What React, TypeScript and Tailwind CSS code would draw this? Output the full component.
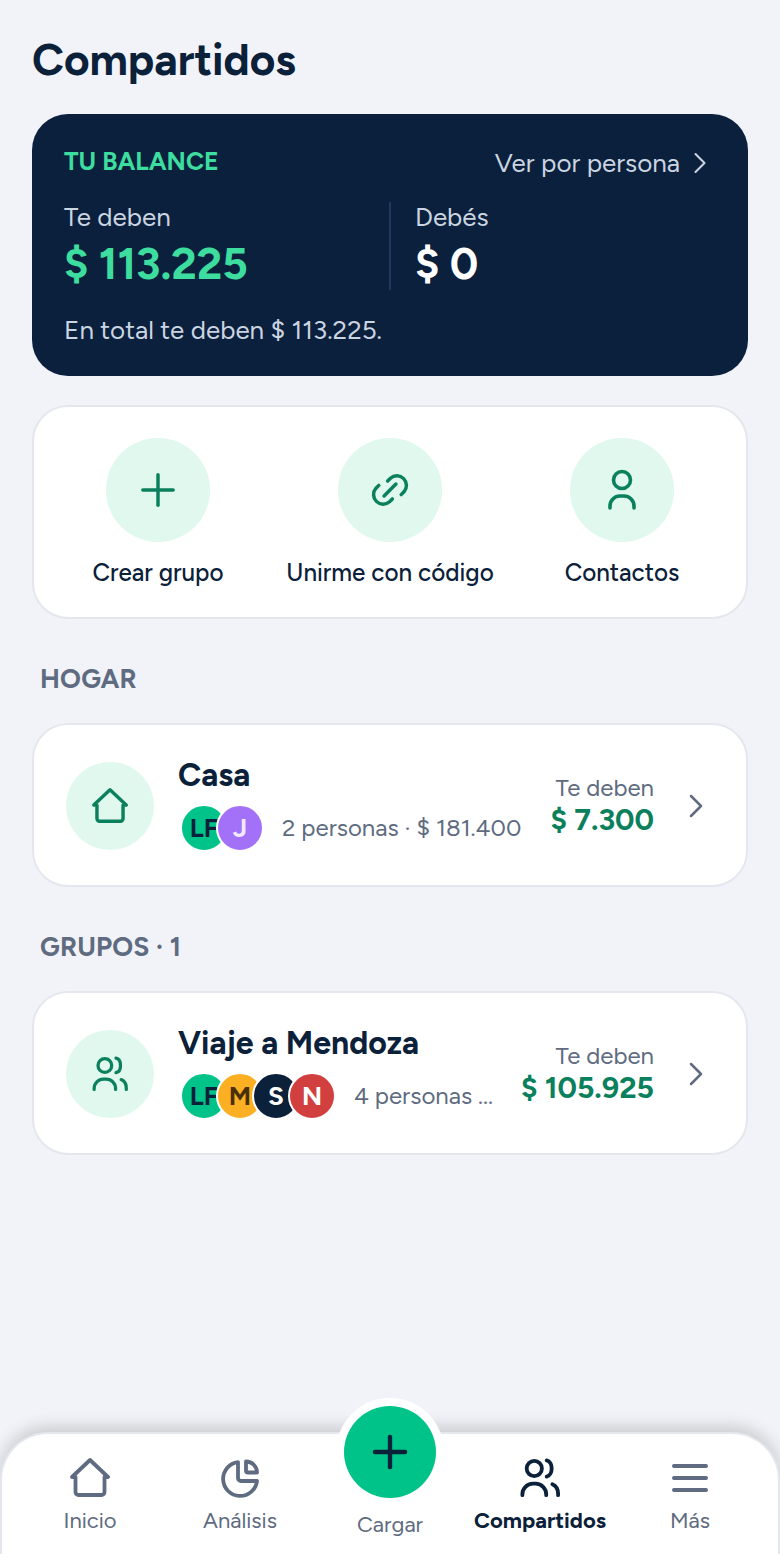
import React from 'react';
import { ChevronRight, Plus } from 'lucide-react';

// hand drawn icons, they don't match any lucide glyph closely enough
const HomeIcon = ({ className }: { className: string }) => (
  <svg viewBox="0 0 40 40" fill="none" stroke="currentColor" strokeWidth="3.8" strokeLinecap="round" strokeLinejoin="round" className={className}>
    <path d="M2 19 20 2l18 17h-3.5v15a3 3 0 0 1-3 3h-23a3 3 0 0 1-3-3V19z" />
  </svg>
);

const UsersIcon = ({ className, strokeWidth = 4 }: { className: string; strokeWidth?: number }) => (
  <svg viewBox="0 0 42 42" fill="none" stroke="currentColor" strokeWidth={strokeWidth} strokeLinecap="round" strokeLinejoin="round" className={className}>
    <circle cx="15" cy="11" r="8" />
    <path d="M28 2.500c7 1.500 7 15.500 0 17" />
    <path d="M2.500 39v-1a11 11 0 0 1 11-11h3a11 11 0 0 1 11 11v1" />
    <path d="M34 27.500c3.500 1.500 6 5.500 6 10v1.500" />
  </svg>
);

const LinkIcon = () => (
  <svg viewBox="0 0 100 100" fill="none" stroke="currentColor" strokeWidth="3.700" strokeLinecap="round" className="size-[94px] text-[#0a805c]">
    <path d="M47.500 40.500l3-3a10.200 10.200 0 0 1 14.400 14.400l-3 3" />
    <path d="M52.500 59.500l-3 3a10.200 10.200 0 0 1-14.400-14.400l3-3" />
    <path d="M43.700 56.300l12.600-12.600" />
  </svg>
);

const PersonIcon = () => (
  <svg viewBox="0 0 100 100" fill="none" stroke="currentColor" strokeWidth="3.600" strokeLinecap="round" className="size-[100px] text-[#0a805c]">
    <circle cx="50" cy="40" r="8.500" />
    <path d="M38 68v-2a10 10 0 0 1 10-10h4a10 10 0 0 1 10 10v2" />
  </svg>
);

const PieIcon = () => (
  <svg viewBox="0 0 40 40" fill="none" stroke="currentColor" strokeWidth="3.800" strokeLinejoin="round" className="size-10">
    <path d="M18 4.100A17 17 0 1 0 37 23H21a3 3 0 0 1-3-3V4.100z" />
    <path d="M26 3.500A11 11 0 0 1 37 14.500h-9a2 2 0 0 1-2-2v-9z" />
  </svg>
);

const MenuIcon = () => (
  <svg viewBox="0 0 40 40" fill="none" stroke="currentColor" strokeWidth="4" strokeLinecap="round" className="size-10">
    <path d="M4 8h32M4 20h32M4 32h32" />
  </svg>
);

type Person = { initials: string; bg: string; text: string };

const lf: Person = { initials: 'LF', bg: 'bg-[#00c389]', text: 'text-[#0b2039]' };
const avatarsCasa: Person[] = [lf, { initials: 'J', bg: 'bg-[#a371f7]', text: 'text-[#f1e9ff]' }];
const avatarsViaje: Person[] = [
  lf,
  { initials: 'M', bg: 'bg-[#fbb024]', text: 'text-[#4a3008]' },
  { initials: 'S', bg: 'bg-[#0b2039]', text: 'text-white' },
  { initials: 'N', bg: 'bg-[#d13f3f]', text: 'text-white' },
];

const Avatars = ({ people }: { people: Person[] }) => (
  <div className="flex shrink-0">
    {people.map((p, i) => (
      <div
        key={p.initials}
        className={`size-12 rounded-full border-2 border-white overflow-hidden flex items-center justify-center text-[26px] font-bold ${p.bg} ${p.text} ${i > 0 ? '-ml-3' : ''}`}
      >
        {p.initials}
      </div>
    ))}
  </div>
);

const GroupCard = ({ icon, name, people, sub, amount }: { icon: React.ReactNode; name: string; people: Person[]; sub: string; amount: string }) => (
  <div className="h-[164px] rounded-[36px] bg-white border-2 border-[#e4e7ee] pl-8 pr-[30px] pt-[2px] flex items-center">
    <div className="size-[88px] shrink-0 rounded-full bg-[#e0f8ee] text-[#0a805c] flex items-center justify-center">{icon}</div>
    <div className="flex-1 min-w-0 ml-6 -mt-[5px]">
      <div className="text-[32px] leading-[40px] font-bold text-[#0b2039] whitespace-nowrap">{name}</div>
      <div className="flex items-center gap-[18px] mt-[9px] pl-[2px]">
        <Avatars people={people} />
        <div className="text-[24px] text-[#5e6b80] whitespace-nowrap">{sub}</div>
      </div>
    </div>
    <div className="shrink-0 text-right ml-2 -mt-[2px]">
      <div className="text-[24px] leading-[30px] text-[#5e6b80]">Te deben</div>
      <div className="-mt-[1px] text-[30px] leading-[36px] font-bold text-[#0a805c]">{amount}</div>
    </div>
    <ChevronRight size={40} strokeWidth={1.5} className="shrink-0 ml-[22px] text-[#5e6b80]" />
  </div>
);

const QuickAction = ({ icon, label }: { icon: React.ReactNode; label: string }) => (
  <div className="flex flex-col items-center">
    <div className="size-[104px] rounded-full bg-[#e0f8ee] text-[#0a805c] flex items-center justify-center">{icon}</div>
    <div className="mt-[16px] text-[24.25px] leading-[30px] font-medium text-[#0b2039] whitespace-nowrap">{label}</div>
  </div>
);

const NavItem = ({ icon, label, active }: { icon?: React.ReactNode; label: string; active?: boolean }) => (
  <div className={`flex flex-col items-center ${active ? 'text-[#0b2039]' : 'text-[#5e6b80]'}`}>
    {icon}
    <div className={`mt-[9px] text-[22px] leading-[28px] whitespace-nowrap ${active ? 'font-bold' : ''}`}>{label}</div>
  </div>
);

export default function App() {
  return (
    <div className="relative h-[1554px] overflow-hidden flex flex-col bg-[#f1f3f8] font-['Figtree','Inter',sans-serif]">
      <div className="flex-1 px-8 pt-[34px]">
        <h1 className="text-[44px] leading-[52px] font-bold text-[#0b2039]">Compartidos</h1>

        {/* Balance */}
        <div className="mt-[28px] h-[262px] rounded-[36px] bg-[#0a203c] px-8 pt-[30px]">
          <div className="flex items-start justify-between">
            <span className="text-[25px] leading-[34px] font-bold text-[#3ddc9f]">TU BALANCE</span>
            <span className="mt-[1px] flex items-center text-[26px] leading-[34px] text-[#cbd5e1]">
              Ver por persona
              <ChevronRight size={36} strokeWidth={1.4} className="ml-[2px] -mr-[2px]" />
            </span>
          </div>
          <div className="flex mt-[21px]">
            <div className="w-[327px] h-[88px] border-r-2 border-[#1c3a5e]">
              <div className="text-[26px] leading-[30px] text-[#cbd5e1]">Te deben</div>
              <div className="mt-[4px] text-[44px] leading-[56px] font-bold text-[#3ddc9f]">$ 113.225</div>
            </div>
            <div className="pl-[24px]">
              <div className="text-[26px] leading-[30px] text-[#cbd5e1]">Debés</div>
              <div className="mt-[4px] text-[44px] leading-[56px] font-bold text-white">$ 0</div>
            </div>
          </div>
          <div className="mt-[22px] text-[26px] leading-[32px] text-[#cbd5e1]">En total te deben $ 113.225.</div>
        </div>

        {/* Acciones */}
        <div className="mt-[29px] h-[214px] rounded-[36px] bg-white border-2 border-[#e4e7ee] px-2 pt-[31px] grid grid-cols-3">
          <QuickAction icon={<Plus size={52} strokeWidth={1.6} />} label="Crear grupo" />
          <QuickAction icon={<LinkIcon />} label="Unirme con código" />
          <QuickAction icon={<PersonIcon />} label="Contactos" />
        </div>

        <div className="mt-[43px] pl-2 text-[26.5px] leading-[34px] tracking-[0.2px] font-bold text-[#5e6b80]">HOGAR</div>
        <div className="mt-[27px]">
          <GroupCard icon={<HomeIcon className="size-9" />} name="Casa" people={avatarsCasa} sub="2 personas · $ 181.400" amount="$ 7.300" />
        </div>

        <div className="mt-[43px] pl-2 text-[26.5px] leading-[34px] tracking-[0.2px] font-bold text-[#5e6b80]">GRUPOS · 1</div>
        <div className="mt-[27px]">
          <GroupCard icon={<UsersIcon className="size-9" strokeWidth={3.8} />} name="Viaje a Mendoza" people={avatarsViaje} sub="4 personas ..." amount="$ 105.925" />
        </div>
      </div>

      {/* Tab bar */}
      <div className="h-[122px] shrink-0 rounded-t-[48px] bg-white border-2 border-b-0 border-[#e4e7ee] shadow-[0_-6px_16px_rgba(0,0,0,0.16)] px-[13px] pt-[24px] grid grid-cols-5">
        <NavItem icon={<HomeIcon className="size-10" />} label="Inicio" />
        <NavItem icon={<PieIcon />} label="Análisis" />
        <div className="flex flex-col items-center pt-[53px] text-[22px] leading-[28px] text-[#5e6b80]">
          Cargar
        </div>
        <NavItem icon={<UsersIcon className="size-10" />} label="Compartidos" active />
        <NavItem icon={<MenuIcon />} label="Más" />
      </div>

      <div className="absolute left-[336px] top-[1398px] size-[108px] rounded-full bg-white flex items-center justify-center">
        <div className="size-[92px] rounded-full bg-[#00c389] text-[#0b2039] flex items-center justify-center">
          <Plus size={52} strokeWidth={2} />
        </div>
      </div>
    </div>
  );
}
